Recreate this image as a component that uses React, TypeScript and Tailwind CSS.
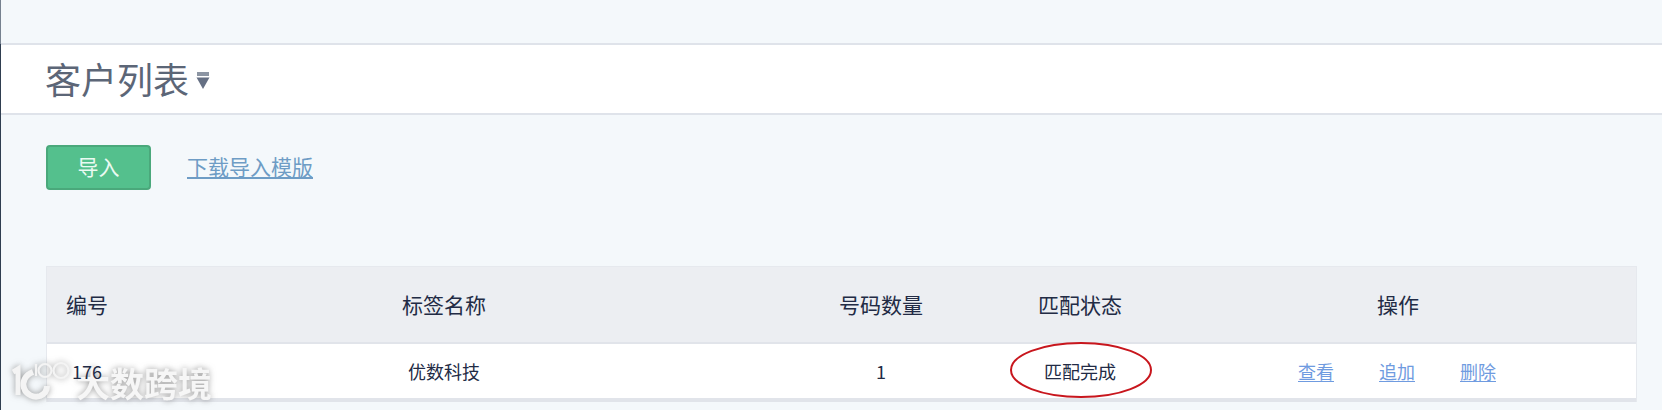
const font = { fontFamily: '"Noto Sans CJK SC", "Noto Sans", sans-serif' };

const cols = "grid grid-cols-[79px_636px_238px_160px_1fr] items-center";

function Watermark() {
  return (
    <div className="absolute left-[12px] top-[361px] flex items-center [filter:drop-shadow(0_0_3px_rgba(90,90,90,0.6))]">
      <svg width="64" height="44" viewBox="0 0 64 44" fill="none" stroke="#f4f4f4">
        <path d="M1 11 L6 8 V34" strokeWidth="5" />
        <path d="M21 11 C13 14 10 21 12 27 C14 34 22 37 28 35 C33 33 35 30 35 25" strokeWidth="6" />
        <circle cx="33" cy="9.5" r="6.5" strokeWidth="2.2" />
        <circle cx="49" cy="9.5" r="7.5" strokeWidth="2.2" />
        <path d="M24 3 V15" strokeWidth="2.2" />
      </svg>
      <span className="text-[34px] leading-[36px] font-bold text-[#f6f6f6]">大数跨境</span>
    </div>
  );
}

export default function App() {
  return (
    <div style={font} className="relative flex h-[410px] w-[1662px] overflow-hidden bg-[#f4f8fb]">
      <div className="flex w-px shrink-0 flex-col">
        <div className="h-[44px] bg-[#76818f]" />
        <div className="flex-1 bg-[#2f3e50]" />
      </div>
      <div className="min-w-0 flex-1">
        <div className="h-[43px]" />
        <header className="flex h-[72px] items-center border-y-2 border-[#dfe3ea] bg-white pl-[44px]">
          <h1 className="mt-[-3px] text-[36px] leading-[48px] font-normal text-[#5c6677]">客户列表</h1>
          <svg width="14" height="17" viewBox="0 0 14 17" className="ml-[7px] mt-[3px]" fill="#667084">
            <rect x="1" y="0" width="12" height="4" fill="#8c95a3" />
            <path d="M0.5 5.5 H13.5 L7 17 Z" />
          </svg>
        </header>
        <div className="ml-[45px] mt-[30px] flex items-center">
          <button className="flex h-[45px] w-[105px] items-center justify-center rounded-[4px] border-2 border-[#4aa87b] bg-[#54c08d] pb-[1px] text-[21px] text-[#eafaf2]">
            导入
          </button>
          <a className="ml-[36px] mt-[-3px] text-[21px] leading-[28px] text-[#6e9cc5] underline underline-offset-2">下载导入模版</a>
        </div>
        <section className="ml-[45px] mt-[76px] w-[1591px] border border-[#e6e9ee] border-b-0">
          <div className={`${cols} h-[75px] bg-[#eceef2] text-[21px] text-[#222b45]`}>
            <div className="pl-[19px] whitespace-nowrap">编号</div>
            <div className="text-center">标签名称</div>
            <div className="text-center">号码数量</div>
            <div className="text-center">匹配状态</div>
            <div className="text-center">操作</div>
          </div>
          <div className={`${cols} h-[60px] border-y-2 border-[#e1e4ea] bg-white text-[18px] text-[#222b45] border-b-4`}>
            <div className="relative z-10 pl-[25px]">176</div>
            <div className="text-center">优数科技</div>
            <div className="text-center">1</div>
            <div className="relative text-center">
              匹配完成
              <svg width="146" height="60" viewBox="0 0 146 60" fill="none" className="absolute left-[8px] top-[-18px]">
                <ellipse cx="73" cy="30" rx="70" ry="27" stroke="#c8161d" strokeWidth="2" />
              </svg>
            </div>
            <div className="flex justify-center gap-[45px] pr-[2px] text-[#6f9be0] underline underline-offset-2">
              <a>查看</a>
              <a>追加</a>
              <a>删除</a>
            </div>
          </div>
        </section>
      </div>
      <Watermark />
    </div>
  );
}
